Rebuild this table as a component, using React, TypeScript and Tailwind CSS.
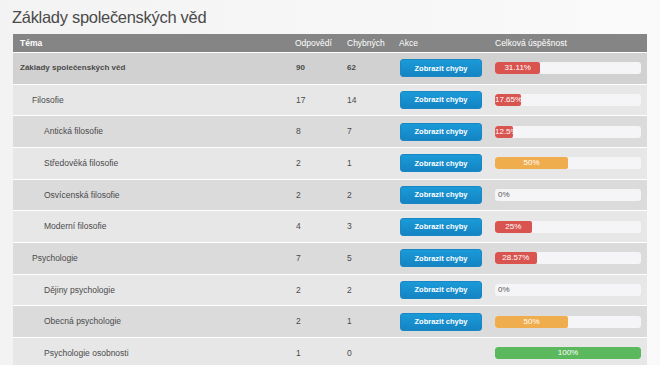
import React from 'react'

type Row = {
  name: string
  level: 0 | 1 | 2
  answers: number
  wrong: number
  button: boolean
  pct: number
  label: string
}

const rows: Row[] = [
  { name: 'Základy společenských věd', level: 0, answers: 90, wrong: 62, button: true, pct: 31.11, label: '31.11%' },
  { name: 'Filosofie', level: 1, answers: 17, wrong: 14, button: true, pct: 17.65, label: '17.65%' },
  { name: 'Antická filosofie', level: 2, answers: 8, wrong: 7, button: true, pct: 12.5, label: '12.5%' },
  { name: 'Středověká filosofie', level: 2, answers: 2, wrong: 1, button: true, pct: 50, label: '50%' },
  { name: 'Osvícenská filosofie', level: 2, answers: 2, wrong: 2, button: true, pct: 0, label: '0%' },
  { name: 'Moderní filosofie', level: 2, answers: 4, wrong: 3, button: true, pct: 25, label: '25%' },
  { name: 'Psychologie', level: 1, answers: 7, wrong: 5, button: true, pct: 28.57, label: '28.57%' },
  { name: 'Dějiny psychologie', level: 2, answers: 2, wrong: 2, button: true, pct: 0, label: '0%' },
  { name: 'Obecná psychologie', level: 2, answers: 2, wrong: 1, button: true, pct: 50, label: '50%' },
  { name: 'Psychologie osobnosti', level: 2, answers: 1, wrong: 0, button: false, pct: 100, label: '100%' },
]

function barColor(pct: number) {
  if (pct >= 100) return 'bg-[#5cb85c]'
  if (pct >= 50) return 'bg-[#f0ad4e]'
  return 'bg-[#d9534f]'
}

function Progress({ pct, label }: { pct: number; label: string }) {
  return (
    <div className="h-[12px] w-[146px] rounded-[3px] bg-[#f5f5f7] overflow-hidden flex">
      {pct > 0 ? (
        <div
          className={`h-full ${barColor(pct)} rounded-[2px] text-white text-[8px] leading-[12px] text-center whitespace-nowrap`}
          style={{ width: `${pct}%` }}
        >
          {label}
        </div>
      ) : (
        <span className="pl-[3px] text-[8px] leading-[12px] text-[#555]">{label}</span>
      )}
    </div>
  )
}

export default function App() {
  return (
    <div
      className="w-[660px] h-[365px] overflow-hidden bg-gradient-to-r from-[#f3f3f3] to-[#fafafa]"
      style={{ fontFamily: '"Liberation Sans", Arial, sans-serif' }}
    >
      {/* Title */}
      <h1 className="h-[34px] pl-[12px] pt-[7px] text-[16.5px] leading-[20px] tracking-[-0.3px] text-[#4a4a4a]">
        Základy společenských věd
      </h1>

      <div className="ml-[13px] w-[634px]">
        {/* Header */}
        <div className="flex h-[18px] items-center bg-[#858585] text-white text-[8.5px]">
          <div className="w-[275px] pl-[7px] font-bold">Téma</div>
          <div className="w-[52px] pl-[7px]">Odpovědí</div>
          <div className="w-[52px] pl-[7px]">Chybných</div>
          <div className="w-[96px] pl-[7px]">Akce</div>
          <div className="w-[159px] pl-[7px]">Celková úspěšnost</div>
        </div>

        {/* Rows */}
        {rows.map((r, i) => {
          const bg =
            r.level === 0 ? 'bg-[#d1d1d1]' : i % 2 === 0 ? 'bg-[#dbdbdc]' : 'bg-[#e7e7e8]'
          const indent = r.level === 0 ? 'pl-[7px]' : r.level === 1 ? 'pl-[19px]' : 'pl-[31px]'
          const weight = r.level === 0 ? 'font-bold text-[8px]' : ''
          return (
            <div
              key={r.name}
              className={`flex h-[31.67px] items-center border-t-[1.5px] border-white ${bg} text-[8.5px] text-[#4a4a4a]`}
            >
              <div className={`w-[275px] ${indent} ${weight}`}>{r.name}</div>
              <div className={`w-[52px] pl-[8px] ${weight}`}>{r.answers}</div>
              <div className={`w-[52px] pl-[7px] ${weight}`}>{r.wrong}</div>
              <div className="w-[96px] pl-[8px]">
                {r.button && (
                  <div className="flex h-[18px] w-[82px] items-center justify-center rounded-[3px] border border-[#1a86c4] bg-gradient-to-b from-[#1b9ad8] to-[#1584c3] text-white text-[7.5px] font-bold">
                    Zobrazit chyby
                  </div>
                )}
              </div>
              <div className="w-[159px] pl-[7px]">
                <Progress pct={r.pct} label={r.label} />
              </div>
            </div>
          )
        })}
      </div>
    </div>
  )
}
